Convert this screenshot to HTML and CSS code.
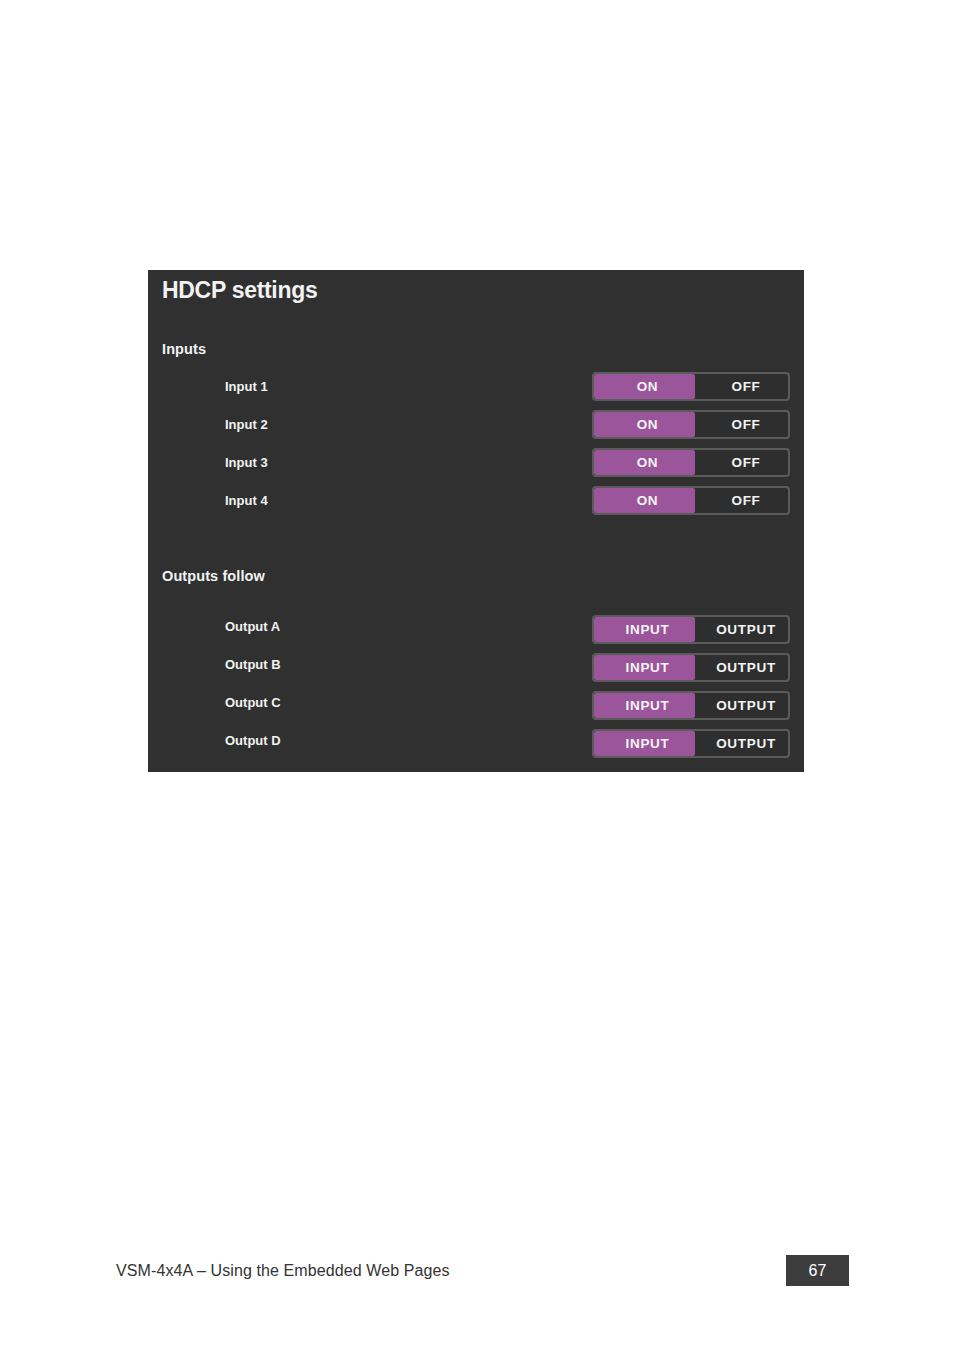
FILE: index.html
```html
<!DOCTYPE html>
<html>
<head>
<meta charset="utf-8">
<link rel="stylesheet" href="styles.css">
</head>
<body>
<div class="page">
  <div class="panel">
    <div class="title">HDCP settings</div>
    <div class="heading heading-inputs">Inputs</div>
    <div class="rows">
      <div class="row"><span class="label">Input 1</span><div class="toggle"><span class="seg on">ON</span><span class="seg off">OFF</span></div></div>
      <div class="row"><span class="label">Input 2</span><div class="toggle"><span class="seg on">ON</span><span class="seg off">OFF</span></div></div>
      <div class="row"><span class="label">Input 3</span><div class="toggle"><span class="seg on">ON</span><span class="seg off">OFF</span></div></div>
      <div class="row"><span class="label">Input 4</span><div class="toggle"><span class="seg on">ON</span><span class="seg off">OFF</span></div></div>
    </div>
    <div class="heading heading-outputs">Outputs follow</div>
    <div class="rows rows-outputs">
      <div class="row"><span class="label">Output A</span><div class="toggle"><span class="seg on">INPUT</span><span class="seg off">OUTPUT</span></div></div>
      <div class="row"><span class="label">Output B</span><div class="toggle"><span class="seg on">INPUT</span><span class="seg off">OUTPUT</span></div></div>
      <div class="row"><span class="label">Output C</span><div class="toggle"><span class="seg on">INPUT</span><span class="seg off">OUTPUT</span></div></div>
      <div class="row"><span class="label">Output D</span><div class="toggle"><span class="seg on">INPUT</span><span class="seg off">OUTPUT</span></div></div>
    </div>
  </div>
  <div class="footer">
    <span class="footer-text">VSM-4x4A – Using the Embedded Web Pages</span>
    <span class="page-num">67</span>
  </div>
</div>
</body>
</html>
```
FILE: styles.css
```css
html, body {
  margin: 0;
  padding: 0;
  background: #ffffff;
}
.page {
  width: 954px;
  height: 1354px;
  padding-top: 270px;
  box-sizing: border-box;
}
.panel {
  margin-left: 148px;
  width: 656px;
  height: 502px;
  box-sizing: border-box;
  background: #303030;
  padding: 0 14px 0 14px;
  font-family: "Liberation Sans", Arial, sans-serif;
  color: #f2f2f2;
}
.title {
  height: 40px;
  line-height: 40px;
  font-size: 23px;
  font-weight: bold;
  letter-spacing: -0.3px;
}
.heading {
  height: 20px;
  line-height: 20px;
  font-size: 14.5px;
  font-weight: bold;
  letter-spacing: 0.1px;
}
.heading-inputs {
  margin-top: 28.5px;
}
.heading-outputs {
  margin-top: 46.5px;
}
.rows {
  margin-top: 8.5px;
  display: flex;
  flex-direction: column;
}
.rows-outputs {
  margin-top: 24.5px;
}
.row {
  height: 38px;
  display: flex;
  align-items: center;
  justify-content: space-between;
}
.label {
  padding-left: 63px;
  font-size: 13px;
  font-weight: bold;
  letter-spacing: 0;
}
.rows-outputs .label {
  margin-bottom: 5px;
}
.toggle {
  width: 198px;
  height: 29px;
  box-sizing: border-box;
  border: 2px solid #5b5b5b;
  border-radius: 4px;
  display: flex;
  overflow: hidden;
  background: #2e2e2e;
}
.seg {
  display: flex;
  align-items: center;
  justify-content: center;
  font-size: 13.5px;
  font-weight: bold;
  letter-spacing: 0.7px;
  color: #f4f4f4;
  box-sizing: border-box;
}
.seg.on {
  width: 101px;
  background: #9b559b;
  padding-left: 6px;
  border-radius: 2px;
}
.seg.off {
  width: 93px;
  padding-left: 9px;
}
.footer {
  margin-top: 483px;
  margin-left: 116px;
  width: 733px;
  display: flex;
  align-items: center;
  justify-content: space-between;
}
.footer-text {
  font-family: "Liberation Sans", Arial, sans-serif;
  font-size: 16px;
  color: #333333;
  letter-spacing: 0.1px;
}
.page-num {
  width: 63px;
  height: 31px;
  background: #3c3c3c;
  color: #ffffff;
  display: flex;
  align-items: center;
  justify-content: center;
  font-family: "Liberation Sans", Arial, sans-serif;
  font-size: 16px;
}
```
